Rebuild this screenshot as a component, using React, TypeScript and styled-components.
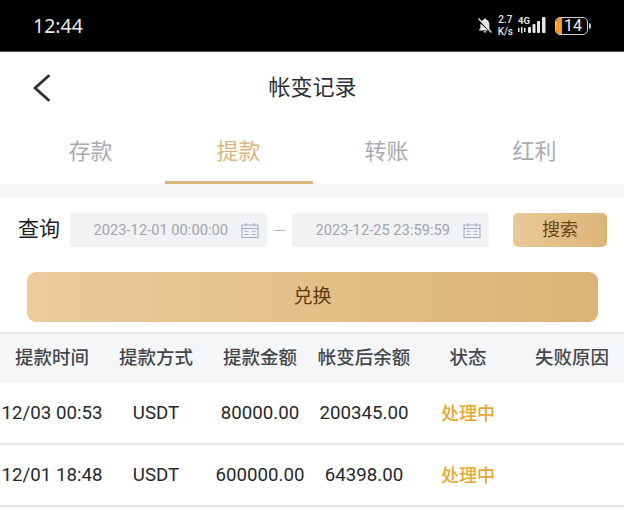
import React from 'react'
import styled, { createGlobalStyle } from 'styled-components'

const GlobalStyle = createGlobalStyle`
    html, body {
        margin: 0;
        padding: 0;
        background: #fff;
    }
    body {
        font-family: "Roboto", "Noto Sans CJK SC", sans-serif;
    }
`

const tabs = ['存款', '提款', '转账', '红利']
const columns = ['提款时间', '提款方式', '提款金额', '帐变后余额', '状态', '失败原因']
const rows = [
    ['12/03 00:53', 'USDT', '80000.00', '200345.00', '处理中', ''],
    ['12/01 18:48', 'USDT', '600000.00', '64398.00', '处理中', ''],
]

const CalendarIcon = () => (
    <svg width="18" height="17" viewBox="0 0 18 17" fill="none" stroke="#a3aebd" strokeWidth="1.1">
        <path d="M1 3h16v12.5H1z" />
        <path d="M1 6.5h16M5 1v3.5M13 1v3.5" />
        <path d="M3.5 9.2h4M10.5 9.2h4M3.5 12.5h4M10.5 12.5h4" />
    </svg>
)

const BellOffIcon = () => (
    <svg width="16" height="17" viewBox="0 0 16 17" fill="#e6e6e6">
        <path d="M8 1.5c-.7 0-1.2.5-1.2 1.1C5.6 3 4.8 3.7 4.4 4.7l8 8.3V7.8c0-2.5-1-4.5-3.2-5.2 0-.6-.5-1.1-1.2-1.1z" />
        <path d="M3.5 6.5c-.1.4-.1.9-.1 1.3v3.4L2 12.8v.7h9.2z" />
        <path d="M6.5 14.3h3c0 .8-.7 1.4-1.5 1.4s-1.5-.6-1.5-1.4z" />
        <path d="M1.5 1.5l13 14" stroke="#e6e6e6" strokeWidth="1.3" />
    </svg>
)

const SignalIcon = () => (
    <svg width="32" height="20" viewBox="0 0 32 20" fill="#e6e6e6">
        <rect x="0" y="12" width="1.5" height="4" />
        <rect x="3" y="11" width="1.5" height="6" />
        <rect x="6" y="12" width="1.5" height="4" />
        <rect x="10" y="11" width="3" height="6" rx="1" />
        <rect x="14.5" y="8" width="3" height="9" rx="1" />
        <rect x="19" y="5" width="3" height="12" rx="1" />
        <rect x="24" y="1" width="3.5" height="16" rx="1" />
    </svg>
)

const App: React.FC = () => {
    return (
        <Page>
            <GlobalStyle />
            <StatusBar>
                <Clock>12:44</Clock>
                <StatusIcons>
                    <BellOffIcon />
                    <Speed>
                        <span>2.7</span>
                        <span>K/s</span>
                    </Speed>
                    <Network>
                        <NetworkLabel>4G</NetworkLabel>
                        <SignalIcon />
                    </Network>
                    <Battery>
                        <BatteryBody>
                            <BatteryFill />
                            <BatteryText>14</BatteryText>
                        </BatteryBody>
                        <BatteryTip />
                    </Battery>
                </StatusIcons>
            </StatusBar>
            <Header>
                <BackButton>
                    <svg width="20" height="30" viewBox="0 0 20 30" fill="none" stroke="#2f3133" strokeWidth="3" strokeLinecap="round" strokeLinejoin="round">
                        <path d="M16.5 3 3 15l13.5 12" />
                    </svg>
                </BackButton>
                <Title>帐变记录</Title>
            </Header>
            <Tabs>
                {tabs.map((tab, i) => (
                    <Tab key={tab} $active={i === 1}>{tab}</Tab>
                ))}
            </Tabs>
            <Band />
            <Filter>
                <FilterLabel>查询</FilterLabel>
                <DateField>
                    <DateText>2023-12-01 00:00:00</DateText>
                    <CalendarIcon />
                </DateField>
                <Dash />
                <DateField>
                    <DateText>2023-12-25 23:59:59</DateText>
                    <CalendarIcon />
                </DateField>
                <SearchButton>搜索</SearchButton>
            </Filter>
            <ExchangeButton>兑换</ExchangeButton>
            <Table>
                <HeadRow>
                    {columns.map((col) => (
                        <HeadCell key={col}>{col}</HeadCell>
                    ))}
                </HeadRow>
                {rows.map((row) => (
                    <Row key={row[0]}>
                        {row.map((cell, i) => (
                            <Cell key={i} $status={i === 4}>{cell}</Cell>
                        ))}
                    </Row>
                ))}
            </Table>
        </Page>
    )
}

const Page = styled.div`
    width: 624px;
    height: 510px;
    overflow: hidden;
    background: #fff;
`
const StatusBar = styled.div`
    height: 52px;
    box-sizing: border-box;
    background: #000;
    border-bottom: 1px solid #555;
    display: flex;
    align-items: center;
    justify-content: space-between;
    padding: 0 33px;
`
const Clock = styled.div`
    color: #e8e8e8;
    font-size: 19.5px;
    font-family: "Noto Sans", sans-serif;
`
const StatusIcons = styled.div`
    display: flex;
    align-items: center;
    gap: 5px;
    color: #e6e6e6;
`
const Speed = styled.div`
    display: flex;
    flex-direction: column;
    align-items: center;
    font-size: 10px;
    line-height: 12px;
    font-weight: 500;
`
const Network = styled.div`
    position: relative;
    display: flex;
`
const NetworkLabel = styled.span`
    position: absolute;
    left: 0;
    top: 0;
    font-size: 9.5px;
    line-height: 9px;
    font-weight: 700;
`
const Battery = styled.div`
    display: flex;
    align-items: center;
    gap: 1px;
`
const BatteryBody = styled.div`
    position: relative;
    width: 33px;
    height: 18px;
    box-sizing: border-box;
    border: 1px solid #cfcfcf;
    border-radius: 5px;
    display: flex;
    align-items: center;
    justify-content: flex-end;
    padding-right: 5px;
    overflow: hidden;
`
const BatteryFill = styled.div`
    position: absolute;
    left: 0;
    top: 0;
    bottom: 0;
    width: 6px;
    background: #f09a2a;
`
const BatteryText = styled.span`
    font-size: 16px;
    line-height: 16px;
    color: #efefef;
`
const BatteryTip = styled.div`
    width: 2px;
    height: 6px;
    background: #cfcfcf;
    border-radius: 0 2px 2px 0;
`
const Header = styled.div`
    height: 70px;
    display: flex;
    align-items: center;
    justify-content: center;
    position: relative;
`
const BackButton = styled.div`
    position: absolute;
    left: 32px;
    top: 21px;
    display: flex;
`
const Title = styled.div`
    font-size: 22px;
    color: #2b3038;
    margin-top: -5px;
    padding-left: 1px;
`
const Tabs = styled.div`
    display: grid;
    grid-template-columns: repeat(4, 148px);
    padding-left: 17px;
    height: 62px;
`
const Tab = styled.div<{ $active?: boolean }>`
    box-sizing: border-box;
    height: 62px;
    padding-top: 15px;
    padding-right: 1px;
    text-align: center;
    font-size: 22px;
    line-height: 30px;
    color: ${(p) => (p.$active ? '#d9b57f' : '#a8abb0')};
    border-bottom: 3px solid ${(p) => (p.$active ? '#d9b57f' : 'transparent')};
`
const Band = styled.div`
    height: 13px;
    background: #f4f6f8;
`
const Filter = styled.div`
    display: flex;
    align-items: center;
    margin-top: 16px;
    height: 34px;
    padding-left: 18px;
`
const FilterLabel = styled.div`
    width: 52px;
    font-size: 21px;
    color: #1d1d1d;
    padding-bottom: 6px;
`
const DateField = styled.div`
    box-sizing: border-box;
    width: 197px;
    height: 34px;
    background: #f1f2f4;
    border-radius: 3px;
    display: flex;
    align-items: center;
    justify-content: flex-end;
    gap: 13px;
    padding-right: 8px;
`
const DateText = styled.span`
    font-size: 14.7px;
    color: #a3a5a9;
    font-family: "Roboto", sans-serif;
`
const Dash = styled.div`
    width: 11px;
    height: 1px;
    background: #b5b8bd;
    margin: 0 7px;
`
const SearchButton = styled.div`
    width: 94px;
    height: 34px;
    margin-left: 24px;
    border-radius: 5px;
    background: linear-gradient(90deg, #e9c997, #dcb478);
    color: #6b4415;
    font-size: 18px;
    padding-bottom: 5px;
    box-sizing: border-box;
    display: flex;
    align-items: center;
    justify-content: center;
`
const ExchangeButton = styled.div`
    width: 571px;
    height: 50px;
    margin: 25px 0 10px 27px;
    border-radius: 9px;
    background: linear-gradient(90deg, #ebcc9b, #dbb376);
    color: #5e3a10;
    font-size: 19px;
    padding-bottom: 5px;
    box-sizing: border-box;
    display: flex;
    align-items: center;
    justify-content: center;
`
const Table = styled.div`
    border-top: 2px solid #e4e5e7;
`
const HeadRow = styled.div`
    display: grid;
    grid-template-columns: repeat(6, 104px);
    height: 49px;
    background: #f4f6f8;
`
const HeadCell = styled.div`
    display: flex;
    align-items: center;
    justify-content: center;
    font-size: 18.5px;
    font-weight: 500;
    color: #44474c;
    white-space: nowrap;
    padding-bottom: 5px;
`
const Row = styled.div`
    display: grid;
    grid-template-columns: repeat(6, 104px);
    height: 62px;
    box-sizing: border-box;
    border-bottom: 2px solid #e4e5e7;
`
const Cell = styled.div<{ $status?: boolean }>`
    display: flex;
    align-items: center;
    justify-content: center;
    font-size: ${(p) => (p.$status ? '18px' : '18.7px')};
    font-weight: ${(p) => (p.$status ? 500 : 400)};
    color: ${(p) => (p.$status ? '#e3a833' : '#26282b')};
    white-space: nowrap;
    padding-bottom: ${(p) => (p.$status ? '2px' : '0')};
`

export default App
